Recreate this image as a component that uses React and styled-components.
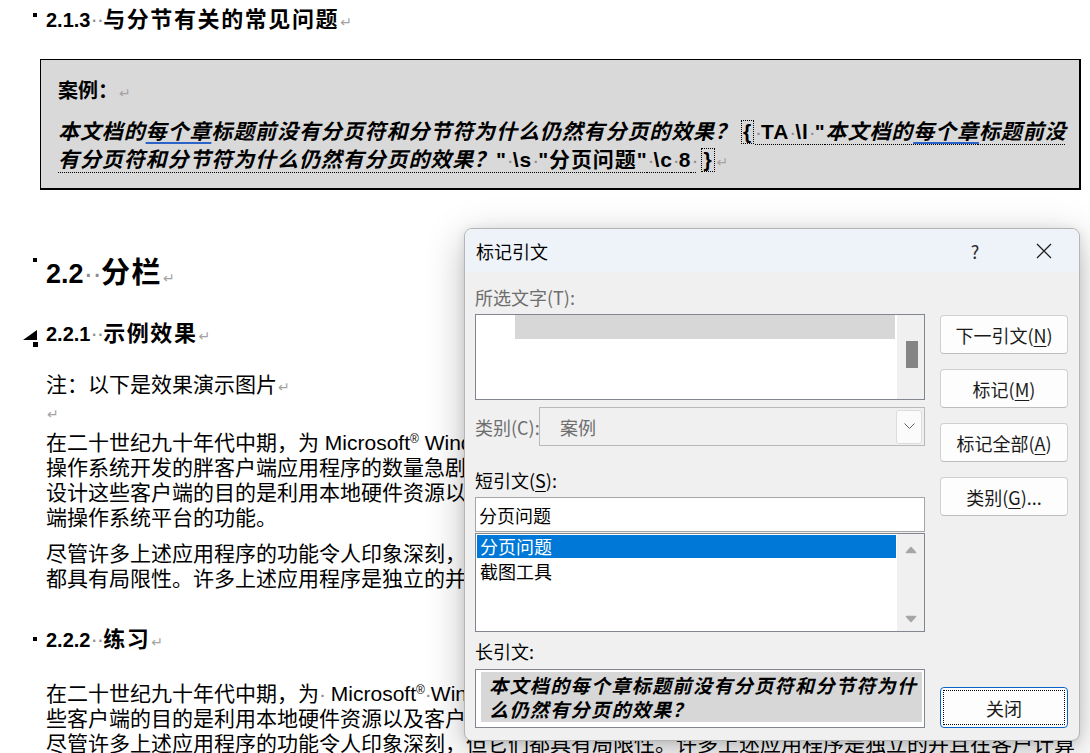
import React from "react";
import styled, { createGlobalStyle } from "styled-components";

const GlobalStyle = createGlobalStyle`
  html, body {
    margin: 0;
    padding: 0;
    background: #ffffff;
  }
  body {
    overflow: hidden;
  }
  *, *::before, *::after {
    box-sizing: border-box;
  }
`;

const DOC_FONT = `"Liberation Sans", "Noto Sans CJK SC", sans-serif`;
const UI_FONT = `"Noto Sans CJK SC", "Noto Sans", sans-serif`;

/* ---------- document page ---------- */

const Screen = styled.div`
  position: relative;
  width: 1090px;
  height: 753px;
  overflow: hidden;
  background: #ffffff;
  color: #000000;
  font-family: ${DOC_FONT};
`;

const Page = styled.main`
  padding: 5px 10px 0 46px;
`;

const Heading = styled.h2`
  position: relative;
  margin: ${(p) => p.$mt}px 0 0;
  height: ${(p) => p.$lh}px;
  font-size: ${(p) => p.$size}px;
  line-height: ${(p) => p.$lh}px;
  font-weight: 700;
  white-space: nowrap;
`;

const Num = styled.span`
  font-size: ${(p) => p.$size}px;
`;

const Title = styled.span`
  letter-spacing: ${(p) => p.$ls}px;
`;

const SpaceDots = styled.span`
  color: #8c8c8c;
  font-weight: 400;
  font-style: normal;
  letter-spacing: -1px;
`;

const ParaMark = styled.span`
  font-family: "DejaVu Sans", sans-serif;
  font-size: 14px;
  line-height: 0;
  font-weight: 400;
  font-style: normal;
  letter-spacing: 0;
  color: #a3a3a3;
  margin-left: 1px;
`;

const KeepSquare = styled.span`
  position: absolute;
  left: -13px;
  top: ${(p) => p.$top}px;
  width: 4px;
  height: 4px;
  background: #000000;
`;

const CollapseMark = styled.svg`
  position: absolute;
  left: -23px;
  top: ${(p) => p.$top}px;
`;

const CaseBox = styled.section`
  margin: 24px -1px 0 -6px;
  padding: 17px 8px 14px 17px;
  background: #d9d9d9;
  border: 1px solid #000000;
  border-right-width: 2px;
  border-bottom-width: 2px;
`;

const CaseLabel = styled.p`
  margin: 0;
  font-size: 20px;
  line-height: 28px;
  font-weight: 700;
`;

const CaseText = styled.p`
  margin: 13px 0 0;
  font-size: 21px;
  line-height: 28px;
  font-weight: 700;
  letter-spacing: 0.9px;
`;

const Quote = styled.span`
  font-style: italic;
`;

const Grammar = styled.span`
  text-decoration: underline solid #2c63c8 2px;
  text-underline-offset: 3px;
`;

const FieldCode = styled.span`
  text-decoration: underline dotted #000000 1px;
  text-underline-offset: 5px;
`;

const Brace = styled.span`
  border: 1px dotted #000000;
  padding: 0 1px;
  margin: 0 1px 0 4px;
  line-height: 22px;
  display: inline-block;
`;

const Para = styled.p`
  margin: ${(p) => p.$mt || 0}px 0 0;
  font-size: 21px;
  line-height: 25px;
`;

const Reg = styled.span`
  font-size: 12px;
  line-height: 0;
  vertical-align: 7px;
`;

/* two-column sample: text flows into the second column after six lines */
const Columns = styled.div`
  margin-top: 6px;
  height: 161px;
  column-count: 2;
  column-gap: 58px;
  column-fill: auto;
`;

/* ---------- mark citation dialog ---------- */

const Dialog = styled.div`
  position: absolute;
  left: 464px;
  top: 228px;
  width: 616px;
  height: 513px;
  display: flex;
  flex-direction: column;
  border: 1px solid #b5b5b5;
  border-radius: 8px;
  overflow: hidden;
  background: #f0f0f0;
  box-shadow: 0 10px 38px rgba(0, 0, 0, 0.26), 0 2px 10px rgba(0, 0, 0, 0.1);
  font-family: ${UI_FONT};
  font-size: 18px;
  color: #000000;
`;

const TitleBar = styled.header`
  height: 43px;
  flex: none;
  display: flex;
  align-items: center;
  padding: 0 12px 0 11px;
  background: #eef2f9;
`;

const DialogTitle = styled.span`
  flex: 1;
  font-size: 18px;
  line-height: 24px;
`;

const CaptionButton = styled.span`
  width: 46px;
  height: 36px;
  display: flex;
  align-items: center;
  justify-content: center;
  margin-left: ${(p) => (p.$close ? 23 : 0)}px;
  font-size: 18px;
  color: #2a2a2a;
`;

const DialogBody = styled.div`
  flex: 1;
  display: flex;
  gap: 15px;
  padding: 13px 11px 12px 10px;
`;

const LeftPane = styled.div`
  width: 450px;
  display: flex;
  flex-direction: column;
`;

const FieldLabel = styled.div`
  height: 24px;
  line-height: 24px;
  margin-top: ${(p) => p.$mt || 0}px;
  width: ${(p) => (p.$width ? `${p.$width}px` : "auto")};
  flex: none;
  color: ${(p) => (p.$muted ? "#6d6d6d" : "#000000")};
  white-space: nowrap;
`;

const AccessKey = styled.span`
  text-decoration: underline;
  text-underline-offset: 3px;
`;

const SelectionBox = styled.div`
  margin-top: 5px;
  height: 86px;
  display: flex;
  border: 1px solid #82868f;
  background: #ffffff;
`;

const SelectionArea = styled.div`
  flex: 1;
  padding: 0 2px 0 39px;
`;

const SelectionBar = styled.div`
  height: 24px;
  background: #d7d7d7;
`;

const ScrollTrack = styled.div`
  width: 27px;
  display: flex;
  flex-direction: column;
  align-items: center;
  background: #f0f0f0;
`;

const Thumb = styled.div`
  width: 12px;
  height: 27px;
  margin-top: 26px;
  margin-left: 3px;
  background: #858585;
`;

const CategoryRow = styled.div`
  margin-top: 7px;
  height: 39px;
  display: flex;
  align-items: center;
`;

const ComboBox = styled.div`
  flex: 1;
  height: 39px;
  display: flex;
  align-items: center;
  border: 1px solid #b9b9b9;
  background: #f0f0f0;
  padding: 1px 2px 1px 20px;
`;

const ComboValue = styled.span`
  flex: 1;
  color: #6d6d6d;
`;

const ComboButton = styled.span`
  width: 26px;
  height: 34px;
  display: flex;
  align-items: center;
  justify-content: center;
  background: #fbfbfb;
  border: 1px solid #dcdcdc;
  border-radius: 3px;
`;

const TextInput = styled.input`
  margin: 5px 0 0;
  height: 35px;
  width: 100%;
  padding: 0 3px;
  border: 1px solid #a6a6a6;
  background: #ffffff;
  font: inherit;
  font-size: 18px;
  color: #000000;
  outline: none;
`;

const ListBox = styled.div`
  margin-top: 1px;
  height: 99px;
  display: flex;
  border: 1px solid #82868f;
  background: #ffffff;
`;

const ListItems = styled.ul`
  flex: 1;
  margin: 0;
  padding: 1px;
  list-style: none;
`;

const ListItem = styled.li`
  height: ${(p) => (p.$selected ? 23 : 24)}px;
  line-height: ${(p) => (p.$selected ? 23 : 26)}px;
  padding-left: 3px;
  background: ${(p) => (p.$selected ? "#0078d7" : "transparent")};
  color: ${(p) => (p.$selected ? "#ffffff" : "#000000")};
`;

const ListScroll = styled.div`
  width: 27px;
  display: flex;
  flex-direction: column;
  align-items: center;
  justify-content: space-between;
  padding: 12px 0 8px;
  background: #f0f0f0;
`;

const LongBox = styled.div`
  margin-top: 6px;
  height: 59px;
  border: 1px solid #82868f;
  background: #ffffff;
  padding: 2px 2px 5px 5px;
`;

const LongText = styled.div`
  height: 100%;
  padding: 1px 3px 0 8px;
  background: #d7d7d7;
  font-size: 19px;
  line-height: 24px;
  font-weight: 700;
  font-style: italic;
  letter-spacing: 1.4px;
`;

const ButtonColumn = styled.div`
  width: 128px;
  display: flex;
  flex-direction: column;
  gap: 15px;
  padding-top: 30px;
`;

const DialogButton = styled.button`
  height: ${(p) => (p.$default ? 41 : 39)}px;
  margin-top: ${(p) => (p.$default ? "auto" : "0")};
  padding: 0;
  border: 1px solid ${(p) => (p.$default ? "#0a63c9" : "#d0d0d0")};
  border-bottom-color: ${(p) => (p.$default ? "#0a63c9" : "#bdbdbd")};
  border-radius: 4px;
  background: #fdfdfd;
  font: inherit;
  font-size: 18px;
  color: #1a1a1a;
  outline: ${(p) => (p.$default ? "1px dotted #000000" : "none")};
  outline-offset: -4px;
`;

const Chevron = () => (
  <svg width="11" height="7" viewBox="0 0 11 7">
    <polyline points="0.5,0.5 5.5,5.5 10.5,0.5" fill="none" stroke="#5f5f5f" strokeWidth="1" />
  </svg>
);

const ScrollArrow = ({ down }) => (
  <svg width="12" height="8" viewBox="0 0 12 8">
    <path
      d={down ? "M1.5 1.5 L10.5 1.5 L6 6.5 Z" : "M6 1.5 L10.5 6.5 L1.5 6.5 Z"}
      fill="#a6a6a6"
      stroke="#a6a6a6"
      strokeWidth="1.6"
      strokeLinejoin="round"
    />
  </svg>
);

const CloseGlyph = () => (
  <svg width="16" height="16" viewBox="0 0 16 16">
    <path d="M1 1 L15 15 M15 1 L1 15" stroke="#1f1f1f" strokeWidth="1.3" fill="none" />
  </svg>
);

const Dots = () => <SpaceDots>··</SpaceDots>;
const Dot = () => <SpaceDots>·</SpaceDots>;
const Mark = () => <ParaMark>↵</ParaMark>;

const QuoteText = () => (
  <Quote>
    本文档的<Grammar>每个章</Grammar>标题前没有分页符和分节符为什么仍然有分页的效果？
  </Quote>
);

export default function App() {
  return (
    <>
      <GlobalStyle />
      <Screen>
        <Page>
          <Heading $mt={0} $size={22} $lh={30}>
            <KeepSquare $top={8} />
            <Num $size={20}>2.1.3</Num>
            <Dots />
            <Title $ls={1.6}>与分节有关的常见问题</Title>
            <Mark />
          </Heading>

          <CaseBox>
            <CaseLabel>
              案例：<Mark />
            </CaseLabel>
            <CaseText>
              <QuoteText />
              <FieldCode>
                <Brace>{"{"}</Brace>
                <Dot />TA<Dot />\l<Dot />"<QuoteText />"<Dot />\s<Dot />"分页问题"<Dot />\c<Dot />8<Dot />
                <Brace>{"}"}</Brace>
              </FieldCode>
              <Mark />
            </CaseText>
          </CaseBox>

          <Heading $mt={63} $size={29} $lh={40}>
            <KeepSquare $top={5} />
            <Num $size={27}>2.2</Num>
            <Dots />
            <Title $ls={1.5}>分栏</Title>
            <Mark />
          </Heading>

          <Heading $mt={26} $size={22} $lh={30}>
            <CollapseMark $top={11} width="16" height="18" viewBox="0 0 16 18">
              <polygon points="0,10 14,0 14,10" fill="#000" />
              <rect x="10" y="12" width="5" height="5" fill="#000" />
            </CollapseMark>
            <Num $size={20}>2.2.1</Num>
            <Dots />
            <Title $ls={1.6}>示例效果</Title>
            <Mark />
          </Heading>

          <Para $mt={23}>
            注：以下是效果演示图片<Mark />
          </Para>
          <Para $mt={2}>
            <Mark />
          </Para>

          <Columns>
            <Para>
              在二十世纪九十年代中期，为 Microsoft<Reg>®</Reg> Windows<Reg>®</Reg> 操作系统开发的胖客户端应用程序的数量急剧增加。设计这些客户端的目的是利用本地硬件资源以及客户端操作系统平台的功能。
            </Para>
            <Para $mt={11}>
              尽管许多上述应用程序的功能令人印象深刻，但它们都具有局限性。许多上述应用程序是独立的并且在客户计算机上运行，几乎不了解它们运行所在的环境，因此很难与其他应用程序共享数据和协同工作。
            </Para>
          </Columns>

          <Heading $mt={34} $size={22} $lh={30}>
            <KeepSquare $top={12} />
            <Num $size={20}>2.2.2</Num>
            <Dots />
            <Title $ls={1.6}>练习</Title>
            <Mark />
          </Heading>

          <Para $mt={26}>
            在二十世纪九十年代中期，为<Dot /> Microsoft<Reg>®</Reg>
            <Dot />Windows<Reg>®</Reg>
            <Dot />操作系统开发的胖客户端应用程序的数量急剧增加。设计这些客户端的目的是利用本地硬件资源以及客户端操作系统平台的功能。
          </Para>
          <Para>
            尽管许多上述应用程序的功能令人印象深刻，但它们都具有局限性。许多上述应用程序是独立的并且在客户计算机上运行。
          </Para>
        </Page>

        <Dialog role="dialog" aria-label="标记引文">
          <TitleBar>
            <DialogTitle>标记引文</DialogTitle>
            <CaptionButton>?</CaptionButton>
            <CaptionButton $close>
              <CloseGlyph />
            </CaptionButton>
          </TitleBar>

          <DialogBody>
            <LeftPane>
              <FieldLabel $muted>所选文字(T):</FieldLabel>
              <SelectionBox>
                <SelectionArea>
                  <SelectionBar />
                </SelectionArea>
                <ScrollTrack>
                  <Thumb />
                </ScrollTrack>
              </SelectionBox>

              <CategoryRow>
                <FieldLabel $muted $width={64}>
                  类别(C):
                </FieldLabel>
                <ComboBox>
                  <ComboValue>案例</ComboValue>
                  <ComboButton>
                    <Chevron />
                  </ComboButton>
                </ComboBox>
              </CategoryRow>

              <FieldLabel $mt={22}>
                短引文(<AccessKey>S</AccessKey>):
              </FieldLabel>
              <TextInput readOnly value="分页问题" />
              <ListBox>
                <ListItems>
                  <ListItem $selected>分页问题</ListItem>
                  <ListItem>截图工具</ListItem>
                </ListItems>
                <ListScroll>
                  <ScrollArrow />
                  <ScrollArrow down />
                </ListScroll>
              </ListBox>

              <FieldLabel $mt={7}>长引文:</FieldLabel>
              <LongBox>
                <LongText>本文档的每个章标题前没有分页符和分节符为什么仍然有分页的效果？</LongText>
              </LongBox>
            </LeftPane>

            <ButtonColumn>
              <DialogButton>
                下一引文(<AccessKey>N</AccessKey>)
              </DialogButton>
              <DialogButton>
                标记(<AccessKey>M</AccessKey>)
              </DialogButton>
              <DialogButton>
                标记全部(<AccessKey>A</AccessKey>)
              </DialogButton>
              <DialogButton>
                类别(<AccessKey>G</AccessKey>)...
              </DialogButton>
              <DialogButton $default>关闭</DialogButton>
            </ButtonColumn>
          </DialogBody>
        </Dialog>
      </Screen>
    </>
  );
}
